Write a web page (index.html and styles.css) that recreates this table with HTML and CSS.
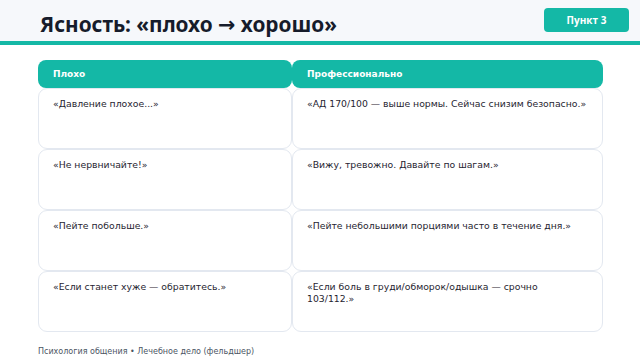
FILE: index.html
```html
<!DOCTYPE html>
<html lang="ru">
<head>
<meta charset="utf-8">
<link rel="stylesheet" href="styles.css">
</head>
<body>
<header class="topbar">
  <h1 class="title">Ясность: «плохо <span class="arrow">→</span> хорошо»</h1>
  <div class="badge">Пункт 3</div>
</header>
<main class="table">
  <div class="head">Плохо</div>
  <div class="head">Профессионально</div>
  <div class="cell">«Давление плохое...»</div>
  <div class="cell">«АД 170/100 — выше нормы. Сейчас снизим безопасно.»</div>
  <div class="cell">«Не нервничайте!»</div>
  <div class="cell">«Вижу, тревожно. Давайте по шагам.»</div>
  <div class="cell">«Пейте побольше.»</div>
  <div class="cell">«Пейте небольшими порциями часто в течение дня.»</div>
  <div class="cell">«Если станет хуже — обратитесь.»</div>
  <div class="cell">«Если боль в груди/обморок/одышка — срочно 103/112.»</div>
</main>
<footer class="footer">Психология общения • Лечебное дело (фельдшер)</footer>
</body>
</html>
```

FILE: styles.css
```css
html, body {
  margin: 0;
  padding: 0;
}
body {
  width: 640px;
  height: 360px;
  background: #ffffff;
  font-family: "DejaVu Sans", sans-serif;
  color: #1f2430;
  overflow: hidden;
}
.topbar {
  height: 41px;
  background: #f6f8fb;
  border-bottom: 4px solid #14b8a6;
  display: flex;
  justify-content: space-between;
  align-items: flex-start;
  padding: 0 11px 0 40px;
}
.title {
  margin: 10px 0 0 0;
  font-family: "Noto Sans", "Open Sans", sans-serif;
  font-weight: 700;
  font-size: 20.8px;
  line-height: 28px;
  color: #161c2b;
}
.arrow {
  font-family: "DejaVu Sans", sans-serif;
  font-weight: 700;
}
.badge {
  margin-top: 8px;
  width: 85px;
  height: 24px;
  border-radius: 4px;
  background: #14b8a6;
  color: #ffffff;
  font-family: "Open Sans", "Noto Sans", sans-serif;
  font-weight: 700;
  font-size: 10px;
  display: flex;
  align-items: center;
  justify-content: center;
}
.table {
  margin: 15px 37px 0 38px;
  display: grid;
  grid-template-columns: 254px 311px;
  grid-template-rows: 28px repeat(4, 61px);
}
.head {
  background: #14b8a6;
  color: #ffffff;
  font-weight: 700;
  font-size: 9px;
  border-radius: 8px;
  padding: 0 15px;
  display: flex;
  align-items: center;
}
.cell {
  border: 1px solid #e3e8f0;
  border-radius: 9px;
  padding: 9px 14.5px 8px 14px;
  font-size: 9.3px;
  line-height: 12px;
  color: #1f2430;
  background: #ffffff;
}
.footer {
  margin: 15px 0 0 38px;
  font-size: 8px;
  color: #4b5563;
}
```
